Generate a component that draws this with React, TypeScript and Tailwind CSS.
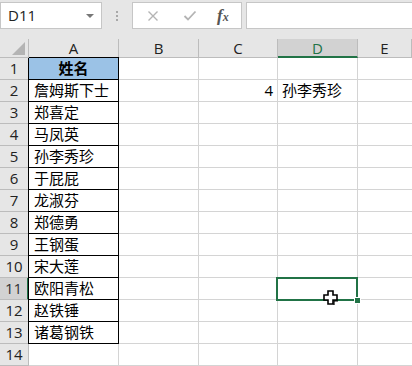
import React from "react";

const names = [
  "詹姆斯下士",
  "郑喜定",
  "马凤英",
  "孙李秀珍",
  "于屁屁",
  "龙淑芬",
  "郑德勇",
  "王钢蛋",
  "宋大莲",
  "欧阳青松",
  "赵铁锤",
  "诸葛钢铁",
];

const cjk = { fontFamily: '"Noto Sans CJK SC", "Noto Sans", sans-serif' };
const latin = { fontFamily: '"Open Sans", "Liberation Sans", sans-serif' };

export default function App() {
  const rows = Array.from({ length: 14 }, (_, i) => i + 1);
  return (
    <div className="relative w-[412px] h-[366px] overflow-hidden bg-white select-none">
      {/* Top bar */}
      <div className="h-[39px] bg-[#e6e6e6] flex items-start pt-[2px]">
        <div className="w-[102px] h-[27px] bg-white border border-[#c6c6c6] flex items-center pl-[7px] pr-[7px]">
          <span className="text-[15px] text-[#222]" style={latin}>D11</span>
          <span className="ml-auto w-0 h-0 border-l-[4px] border-r-[4px] border-t-[4px] border-l-transparent border-r-transparent border-t-[#777]" />
        </div>
        <div className="w-[30px] h-[27px] flex flex-col items-center justify-center gap-[2px]">
          <span className="w-[2px] h-[2px] bg-[#a8a8a8]" />
          <span className="w-[2px] h-[2px] bg-[#a8a8a8]" />
          <span className="w-[2px] h-[2px] bg-[#a8a8a8]" />
        </div>
        <div className="w-[110px] h-[27px] bg-white border border-[#c6c6c6] flex items-center">
          <svg width="12" height="12" viewBox="0 0 12 12" className="ml-[14px]">
            <path d="M1.5 1.5 L10.5 10.5 M10.5 1.5 L1.5 10.5" stroke="#b4b4b4" strokeWidth="1.4" />
          </svg>
          <svg width="14" height="12" viewBox="0 0 14 12" className="ml-[24px]">
            <path d="M1.5 6 L5 9.5 L12.5 1.5" stroke="#b4b4b4" strokeWidth="1.8" fill="none" />
          </svg>
          <span className="ml-[20px] italic font-bold text-[#555] leading-none" style={{ fontFamily: '"Liberation Serif", serif' }}>
            <span className="text-[17px]">f</span>
            <span className="text-[12px]">x</span>
          </span>
        </div>
        <div className="ml-[4px] flex-1 h-[27px] bg-white border border-[#c6c6c6] border-r-0" />
      </div>

      {/* Sheet grid */}
      <div className="grid grid-cols-[29px_90px_80px_79px_80px_1fr] grid-rows-[19px_repeat(14,22px)]">
        {/* header row */}
        <div className="relative bg-[#e6e6e6] border-r border-b border-[#bcbcbc]">
          <svg width="13" height="13" viewBox="0 0 13 13" className="absolute left-[12px] top-[3px]">
            <polygon points="13,0 13,13 0,13" fill="#b4b4b4" />
          </svg>
        </div>
        {["A", "B", "C", "D", "E"].map((c) => {
          const sel = c === "D";
          return (
            <div
              key={c}
              className={
                sel
                  ? "bg-[#d2d2d2] border-r border-[#bcbcbc] border-b-2 border-b-[#217346] flex items-center justify-center text-[15px] text-[#217346]"
                  : "bg-[#e6e6e6] border-r border-b border-[#bcbcbc] flex items-center justify-center text-[15px] text-[#222]"
              }
              style={latin}
            >
              <span className="leading-none pt-[1px]">{c}</span>
            </div>
          );
        })}

        {rows.map((r) => {
          const selRow = r === 11;
          const inTable = r <= 13;
          return (
            <React.Fragment key={r}>
              <div
                className={
                  (selRow
                    ? "bg-[#d2d2d2] text-[#333] border-r-2 border-r-[#217346] "
                    : "bg-[#e6e6e6] text-[#222] border-r border-r-[#bcbcbc] ") +
                  "border-b border-b-[#bcbcbc] flex items-center justify-center text-[15px]"
                }
                style={latin}
              >
                {r}
              </div>
              {/* A */}
              <div
                className={
                  (r === 1 ? "bg-[#9bc2e6] justify-center font-bold border-t border-t-black -mt-[1px] " : "pl-[5px] ") +
                  (inTable
                    ? "border-l border-l-black -ml-[1px] border-r border-r-black border-b border-b-black "
                    : "border-r border-r-[#d4d4d4] border-b border-b-[#d4d4d4] ") +
                  "flex items-center text-[15px] text-black"
                }
                style={cjk}
              >
                {r === 1 ? "姓名" : inTable ? names[r - 2] : ""}
              </div>
              {/* B */}
              <div className="border-r border-b border-[#d4d4d4]" />
              {/* C */}
              <div className="border-r border-b border-[#d4d4d4] flex items-center justify-end pr-[4px] text-[15px] text-black" style={latin}>
                {r === 2 ? "4" : ""}
              </div>
              {/* D */}
              <div className="border-r border-b border-[#d4d4d4] flex items-center pl-[4px] text-[15px] text-black whitespace-nowrap" style={cjk}>
                {r === 2 ? "孙李秀珍" : ""}
              </div>
              {/* E */}
              <div className="border-b border-[#d4d4d4]" />
            </React.Fragment>
          );
        })}
      </div>

      {/* Selection overlay for D11 */}
      <div className="absolute left-[276px] top-[277px] w-[82px] h-[24px] border-2 border-[#217346] pointer-events-none" />
      <div className="absolute left-[354px] top-[297px] w-[7px] h-[7px] bg-[#217346] border border-white pointer-events-none" />

      {/* Cursor */}
      <svg width="16" height="16" viewBox="0 0 16 16" className="absolute left-[323px] top-[290px]">
        <polygon
          points="5,1 10,1 10,5 14,5 14,10 10,10 10,14 5,14 5,10 1,10 1,5 5,5"
          fill="#fff"
          stroke="#000"
          strokeWidth="1.6"
        />
        <path d="M11 15 L11 11 L15 11" stroke="#000" strokeWidth="1.2" fill="none" />
      </svg>
    </div>
  );
}
